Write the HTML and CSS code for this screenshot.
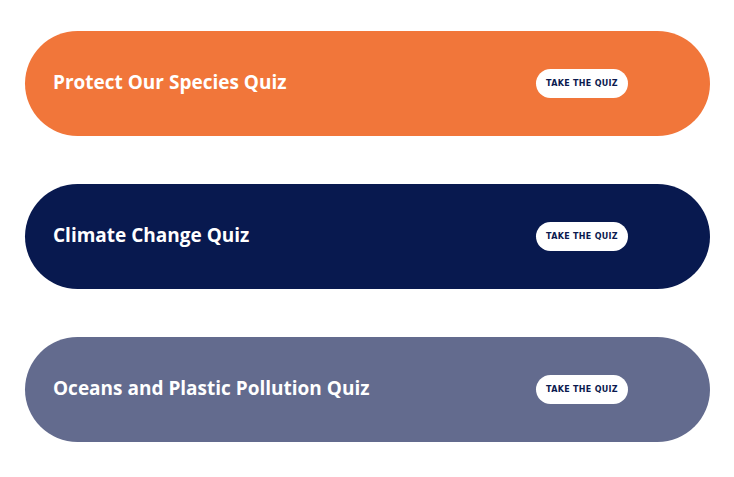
FILE: index.html
```html
<!DOCTYPE html>
<html>
<head>
<meta charset="utf-8">
<link rel="stylesheet" href="styles.css">
</head>
<body>
<div class="list">
  <div class="card orange">
    <span class="title">Protect Our Species Quiz</span>
    <a class="btn">TAKE THE QUIZ</a>
  </div>
  <div class="card navy">
    <span class="title">Climate Change Quiz</span>
    <a class="btn">TAKE THE QUIZ</a>
  </div>
  <div class="card slate">
    <span class="title">Oceans and Plastic Pollution Quiz</span>
    <a class="btn">TAKE THE QUIZ</a>
  </div>
</div>
</body>
</html>
```
FILE: styles.css
```css
html, body {
  margin: 0;
  padding: 0;
  background: #ffffff;
}
.list {
  display: flex;
  flex-direction: column;
  gap: 48px;
  padding: 31px 24px 0 25px;
}
.card {
  height: 105px;
  border-radius: 53px;
  display: flex;
  align-items: center;
  justify-content: space-between;
  padding: 0 82px 0 28px;
  box-sizing: border-box;
}
.orange { background: #f1763a; }
.navy { background: #08194f; }
.slate { background: #636b8e; }
.title {
  font-family: "Open Sans", sans-serif;
  font-weight: 700;
  font-size: 19px;
  line-height: 24px;
  padding-bottom: 4px;
  color: #ffffff;
}
.btn {
  display: flex;
  align-items: center;
  justify-content: center;
  width: 92px;
  height: 29px;
  border-radius: 15px;
  background: #ffffff;
  color: #0b1a4f;
  font-family: "DejaVu Sans", sans-serif;
  font-weight: 700;
  font-size: 8px;
  letter-spacing: 0.3px;
}
```
